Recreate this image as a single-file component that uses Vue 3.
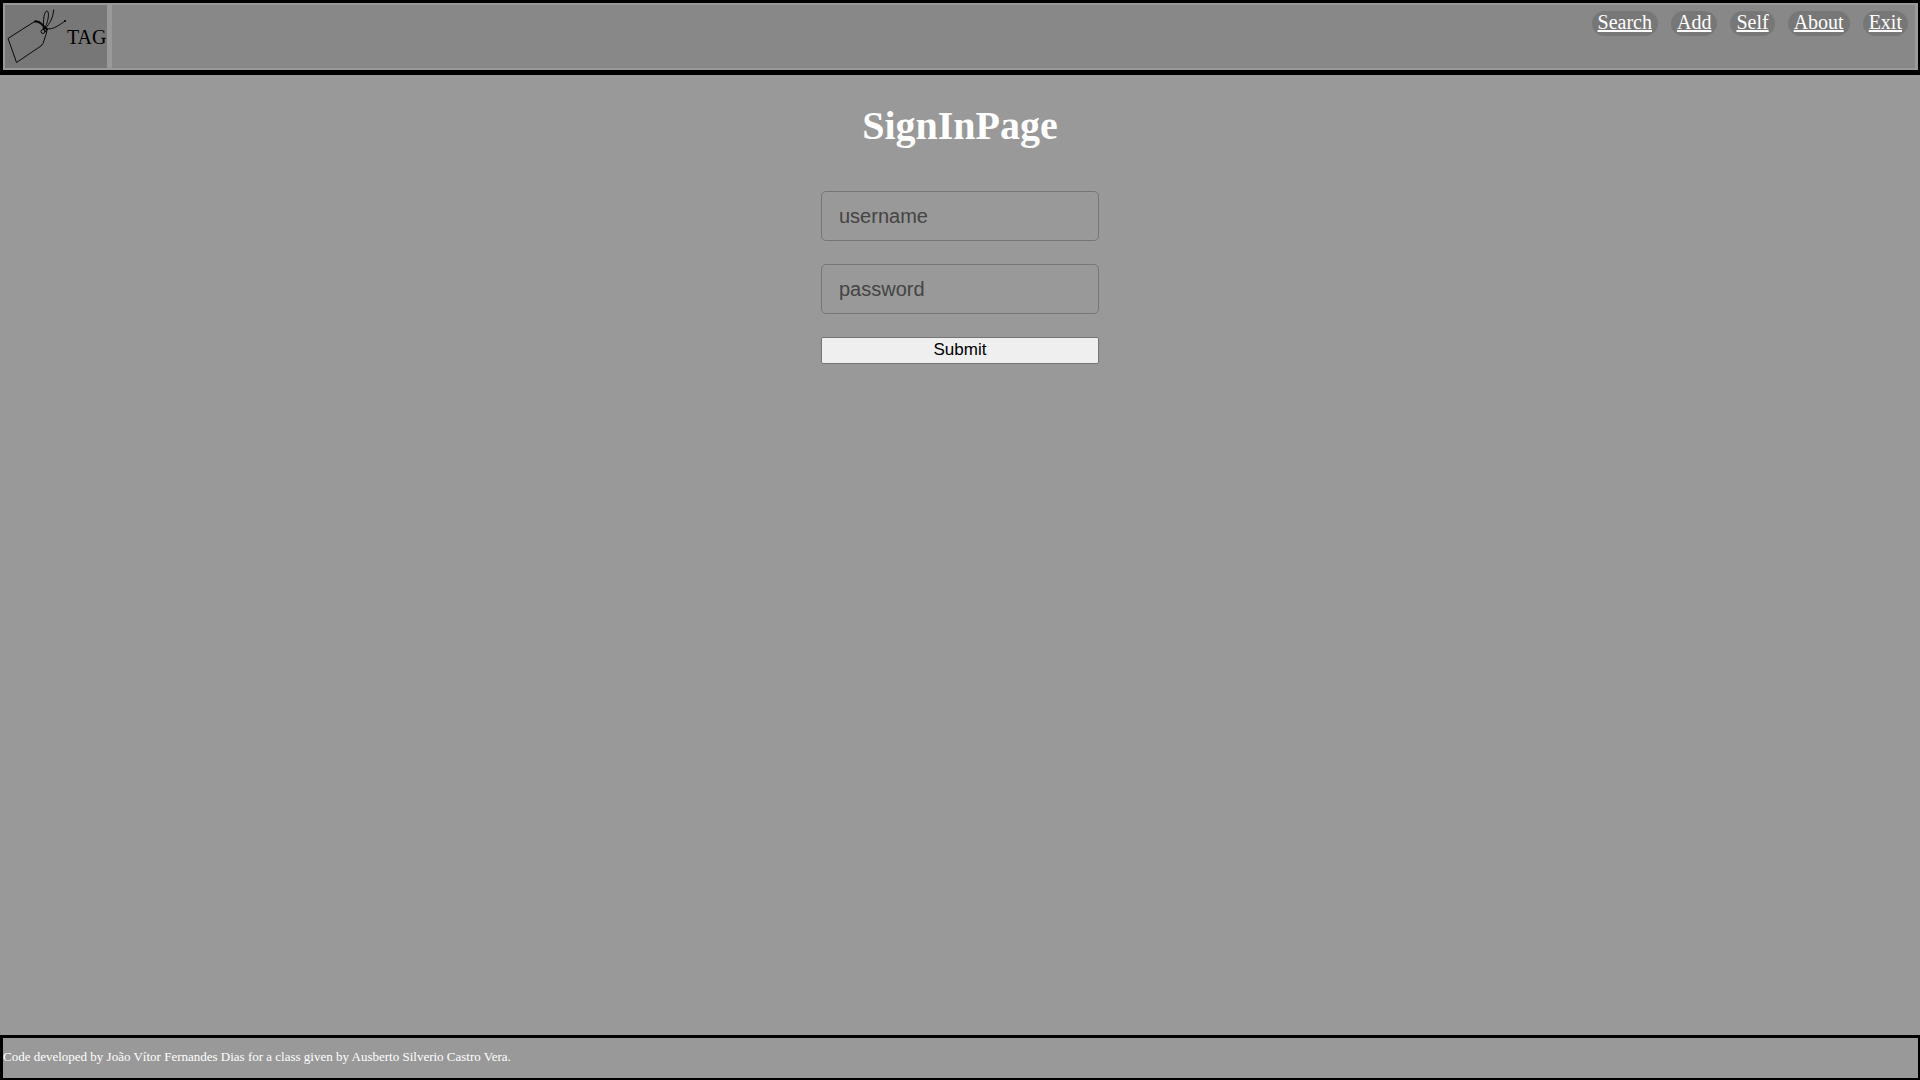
<script setup>
import { ref } from 'vue'

const links = ['Search', 'Add', 'Self', 'About', 'Exit']
const username = ref('')
const password = ref('')
</script>

<template>
  <div class="page">
    <header class="header">
      <div class="brand">
        <svg class="logo" viewBox="0 0 62 63" aria-hidden="true">
          <path class="outline" d="M31 16 Q34 16 36 18 L42 24.500 Q41.500 29 39.500 34 Q38.500 39 36 41 L27 47 L11.500 57.500 L7.500 46 L3 33.500 L17 24.500 Z" />
          <path class="knot" d="M30 16.500 Q33 16 36 18.500 L42 24.500" />
          <circle class="string" cx="38" cy="26.500" r="2" />
          <path class="string" d="M38.500 24.500 C38 15 39 6.500 42 6 C45 6.500 43 19 39 24 M40 24 C45 18 48 13 48.700 5 M37 20 C43 27 49 24 60 16 M41 27 L38 23" />
          <circle cx="60" cy="16" r="1" />
        </svg>
        <span class="name">TAG</span>
      </div>
      <nav class="nav">
        <a v-for="link in links" :key="link" class="link" href="#">{{ link }}</a>
      </nav>
    </header>

    <main class="main">
      <h1 class="title">SignInPage</h1>
      <form class="form" @submit.prevent>
        <input v-model="username" class="field" type="text" placeholder="username" aria-label="username" />
        <input v-model="password" class="field" type="password" placeholder="password" aria-label="password" />
        <button class="submit" type="submit">Submit</button>
      </form>
    </main>

    <footer class="footer">
      Code developed by João Vítor Fernandes Dias for a class given by Ausberto Silverio Castro Vera.
    </footer>
  </div>
</template>

<style>
body {
  margin: 0;
  background: #999;
}
</style>

<style scoped>
.page {
  display: flex;
  flex-direction: column;
  min-height: 100vh;
  background: #999;
  color: #fff;
  font-family: "Liberation Serif", "Times New Roman", serif;
}

.header {
  display: flex;
  gap: 5px;
  padding: 2px 3px 2px 2px;
  border: solid #000;
  border-width: 3px 2px 5px 3px;
}

.brand {
  display: flex;
  align-items: center;
  background: #777;
  color: #000;
  font-size: 20px;
}

.logo {
  display: block;
  width: 62px;
  height: 63px;
}

.logo path,
.logo .string {
  fill: none;
  stroke: #080808;
  stroke-linecap: round;
  stroke-linejoin: round;
  stroke-width: 1;
}

.logo .knot {
  stroke-width: 2;
}

.name {
  padding-top: 2px;
}

.nav {
  display: flex;
  flex: 1;
  justify-content: flex-end;
  align-items: flex-start;
  gap: 13px;
  padding: 6px 7px 0;
  background: #888;
}

.link {
  padding: 0 6px 2px;
  border-radius: 13px;
  background: #777;
  color: #fff;
  font-size: 20px;
  line-height: 23px;
  text-decoration: underline;
}

.main {
  display: flex;
  flex: 1;
  flex-direction: column;
  align-items: center;
}

.title {
  margin: 28px 0 42px;
  font-size: 40px;
  line-height: 46px;
}

.form {
  display: flex;
  flex-direction: column;
  gap: 23px;
  width: 278px;
}

.field,
.submit {
  box-sizing: border-box;
  width: 100%;
  border: 1px solid #767676;
  font-family: "Liberation Sans", Arial, sans-serif;
}

.field {
  height: 50px;
  padding: 0 17px;
  border-radius: 5px;
  background: transparent;
  color: #222;
  font-size: 20px;
}

.field::placeholder {
  color: #444;
}

.submit {
  height: 27px;
  padding: 0 0 2px;
  border-radius: 2px;
  background: #efefef;
  color: #000;
  font-size: 17px;
  line-height: 23px;
}

.footer {
  padding: 11px 0 13px;
  border: solid #000;
  border-width: 3px 2px 2px 3px;
  font-size: 13px;
  line-height: 16px;
}
</style>
